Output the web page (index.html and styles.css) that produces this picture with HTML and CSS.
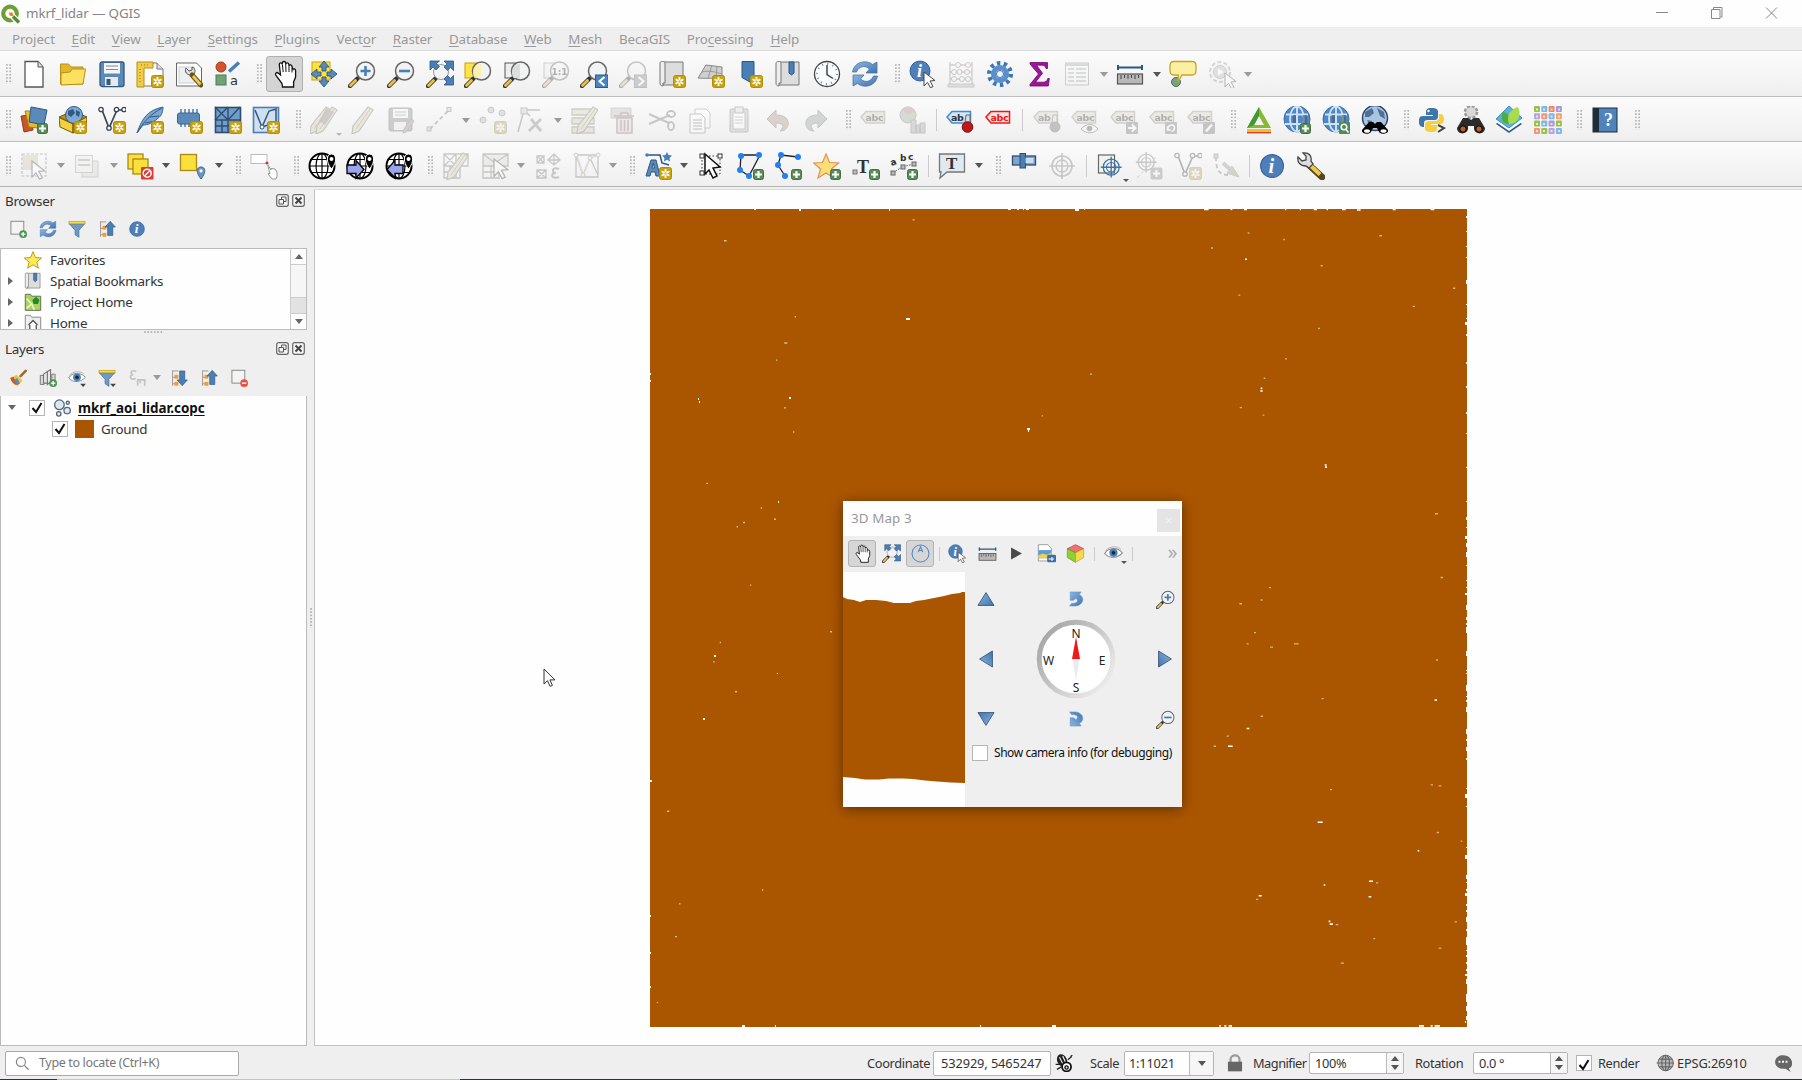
FILE: index.html
```html
<!DOCTYPE html>
<html lang="en">
<head>
<meta charset="utf-8">
<title>mkrf_lidar — QGIS</title>
<link rel="stylesheet" href="styles.css">
</head>
<body>
<svg class="paints" aria-hidden="true">
  <defs>
    <linearGradient id="g-blue" x1="0" y1="0" x2="1" y2="1"><stop offset="0" stop-color="#8db6e0"/><stop offset="1" stop-color="#3f74ae"/></linearGradient>
    <linearGradient id="g-ring" x1="0" y1="0.1" x2="1" y2="0.9"><stop offset="0" stop-color="#a2a2a2"/><stop offset=".45" stop-color="#c4c4c4"/><stop offset="1" stop-color="#f2f2f2"/></linearGradient>
  </defs>
</svg>
<svg class="sprite" aria-hidden="true">
  <g id="b-new"><rect x="15.500" y="15.500" width="12" height="12" rx="2" fill="#c9a20c" stroke="#b28f0a"/><path d="M21.500 17v9M17.600 19.300l7.800 4.500M25.400 19.300l-7.800 4.500" stroke="#fff" stroke-width="1.800"/><circle cx="21.500" cy="21.500" r="1.200" fill="#d9b93c"/></g>
  <g id="b-add"><rect x="17.500" y="17.500" width="10" height="10" rx="2" fill="#5a8c5a" stroke="#3f713f"/><path d="M22.500 19v7M19 22.500h7" stroke="#fff" stroke-width="2.200"/></g>
  <g id="arrow-cursor"><path d="M0 0l11 8.500-5 .5 3 5.500-2.500 1.300-3-5.500L0 14z" fill="#fff" stroke="#444" stroke-width="1"/></g>
  <g id="handle"><path d="M9.500 18.500L2 26" stroke="#333" stroke-width="4.400" stroke-linecap="round"/><path d="M7.500 20.500L2.500 25.500" stroke="#edc243" stroke-width="2.800" stroke-linecap="round"/></g>
  <g id="lens"><use href="#handle"/><circle cx="17.500" cy="11" r="9" fill="#f1f3f4" stroke="#666" stroke-width="1.500"/></g>
  <g id="tag"><path d="M1 11L6 5.500h18.500v11.500H6z" stroke-width="1.500"/></g>

  <symbol id="i-file" viewBox="0 0 28 28"><path d="M5 1.500h13l5 5.500v20H5z" fill="#fff" stroke="#555" stroke-width="1.300"/><path d="M18 1.500V7h5" fill="#ddd" stroke="#555"/></symbol>
  <symbol id="i-open" viewBox="0 0 28 28"><path d="M1.500 24V4h8l2.500 3h12v17z" fill="#e3b72a" stroke="#b98f17"/><path d="M2 25V13l9-1 2-3h13.500L24 24z" fill="#fce161" stroke="#b98f17"/></symbol>
  <symbol id="i-save" viewBox="0 0 28 28"><rect x="2" y="2" width="24" height="24.500" rx="2" fill="#5b8ab8" stroke="#33597f" stroke-width="1.300"/><rect x="6" y="3" width="16" height="10.500" fill="#f4f6f7"/><path d="M8 6h12M8 9.500h12" stroke="#888"/><rect x="7" y="17" width="13" height="9" fill="#e8ebed"/><rect x="8.500" y="19" width="4" height="6" fill="#33597f"/></symbol>
  <symbol id="i-layout" viewBox="0 0 28 28"><path d="M3 3h18l6 6v17H3z" fill="#fff" stroke="#777"/><path d="M21 3v6h6" fill="#ddd" stroke="#777"/><path d="M1 2h16v6H8v19H1z" fill="#f0cc4c" stroke="#b7900f"/><path d="M5 5h9M4 9v15" stroke="#c9a20c" stroke-dasharray="1 2" stroke-width="2"/><use href="#b-new"/></symbol>
  <symbol id="i-layouts" viewBox="0 0 28 28"><path d="M1.500 3h20l5 5v18h-25z" fill="#fff" stroke="#666"/><path d="M4 7h15v16H4z" fill="#eef1f4" stroke="#ccc"/><path d="M11 8l3 3 3-1 0-3c3 1 4 4 2 7l-3 1c-4 0-7-3-5-7z" fill="#ddd" stroke="#555"/><path d="M17 15l9 10" stroke="#6a5617" stroke-width="5" stroke-linecap="round"/><path d="M18 16l7.500 8.500" stroke="#efc94f" stroke-width="2.800"/></symbol>
  <symbol id="i-style" viewBox="0 0 28 28"><circle cx="7" cy="7" r="5" fill="#d4532e" stroke="#a43b1d"/><path d="M25 2.500L15 11.500" stroke="#4a7fb5" stroke-width="3.500"/><rect x="2" y="15" width="10" height="10" fill="#6fa277" stroke="#4a7d53"/><text x="16" y="25" class="t-icon t-reg" font-size="13">a</text></symbol>
  <symbol id="i-hand" viewBox="0 0 28 28"><path d="M9.500 15L8.300 4.500c-.2-2 2.600-2.300 3 0V3c.2-2 3.200-2 3.400 0v1c.4-1.700 3-1.500 3.200.4v1.400c.6-1.500 3-1 3 .8L22 9.500c.6-1.200 2.700-.8 2.600 1.200V17l-2 5v5H11.500l-.5-3.500L5 15.500c-1.500-2.300.8-3.900 2.400-2.300z" fill="#fff" stroke="#111" stroke-width="1.300"/><path d="M11.400 4.500l.8 7.500M14.700 4l.3 8M18 5.500v6.500M21 8v4.500" fill="none" stroke="#111"/></symbol>
  <symbol id="i-pansel" viewBox="0 0 28 28"><rect x="2" y="2" width="18" height="18" fill="#ffe340" stroke="#c9a20c"/><path d="M14 1l5 6h-3v4h-4V7H9zM14 27l-5-6h3v-4h4v4h3zM1 14l6-5v3h4v4H7v3zM27 14l-6 5v-3h-4v-4h4V9z" fill="#5b8ab8" stroke="#2d5681" stroke-width=".9"/></symbol>
  <symbol id="i-zin" viewBox="0 0 28 28"><use href="#lens"/><path d="M17.500 6v10M12.500 11h10" stroke="#4a7fb5" stroke-width="2.600"/></symbol>
  <symbol id="i-zout" viewBox="0 0 28 28"><use href="#lens"/><path d="M12 11h11" stroke="#4a7fb5" stroke-width="2.600"/></symbol>
  <symbol id="i-zfull" viewBox="0 0 28 28"><use href="#handle"/><circle cx="15" cy="12" r="7.500" fill="#f1f3f4" stroke="#999"/><path d="M4 1h9.500l-3 2.500 3 3-3.500 3.500-3-3-3 3zM27.500 1v9.500l-3-3-3 3L18 7l3-3-3-3zM27.500 25h-9.500l3-3-3-3 3.500-3.500 3 3 3-3z" fill="#4a7fb5" stroke="#2d5681" stroke-width=".8"/></symbol>
  <symbol id="i-zsel" viewBox="0 0 28 28"><rect x="1" y="3" width="15" height="15" fill="#ffe340" stroke="#c9a20c"/><use href="#lens"/><path d="M17 4v14h-6.500c-3-5-1.500-12 4-14z" fill="#fbf0a8" opacity=".9"/></symbol>
  <symbol id="i-zlay" viewBox="0 0 28 28"><rect x="2" y="3" width="14" height="15" fill="#eee" stroke="#555"/><use href="#lens"/><path d="M17 4v14h-6.500c-3-5-1.500-12 4-14z" fill="#ddd"/></symbol>
  <symbol id="i-znat" viewBox="0 0 28 28"><rect x="2" y="3" width="14" height="15" fill="#eee" stroke="#888"/><use href="#lens"/><text x="9.500" y="15" class="t-icon" font-size="9">1:1</text></symbol>
  <symbol id="i-zlast" viewBox="0 0 28 28"><use href="#lens"/><rect x="15.500" y="15" width="12.500" height="12.500" fill="#4a85c0" stroke="#33597f"/><path d="M24.500 17l-5 4.200 5 4.200" fill="none" stroke="#fff" stroke-width="2"/></symbol>
  <symbol id="i-znext" viewBox="0 0 28 28"><use href="#lens"/><rect x="15.500" y="15" width="12.500" height="12.500" fill="#888" stroke="#666"/><path d="M19.500 17l5 4.200-5 4.200" fill="none" stroke="#fff" stroke-width="2"/></symbol>
  <g id="scroll"><path d="M5 2h20v23H5z" fill="#ddd" stroke="#777"/><path d="M2 3c0-2 5-2 5 0v20h-2v3c-2 0-3-1-3-3z" fill="#eee" stroke="#777"/></g>
  <symbol id="i-nmap" viewBox="0 0 28 28"><use href="#scroll"/><use href="#b-new"/></symbol>
  <symbol id="i-n3d" viewBox="0 0 28 28"><path d="M1 18L9 5l16 2v13c-6-3-12-1-24-2z" fill="#cfcfcf" stroke="#888"/><path d="M5 12c7-2 13 0 20 2M15 5l-4 13M20 6l-1 13" fill="none" stroke="#999"/><use href="#b-new"/></symbol>
  <symbol id="i-nbook" viewBox="0 0 28 28"><path d="M7 1.500h12v23l-5-3-7-4z" fill="#4a7fb5" stroke="#2d5681"/><use href="#b-new"/></symbol>
  <symbol id="i-book" viewBox="0 0 28 28"><use href="#scroll"/><path d="M15 2h5v11l-2.500 2-2.500-2z" fill="#4a7fb5" stroke="#2d5681"/></symbol>
  <symbol id="i-clock" viewBox="0 0 28 28"><circle cx="14" cy="14" r="12.500" fill="#fafcff" stroke="#444" stroke-width="1.300"/><circle cx="14" cy="14" r="10" fill="none" stroke="#5b8ab8" stroke-width="2" stroke-dasharray="1 4.236"/><path d="M14 5v9.500l6 4" fill="none" stroke="#444" stroke-width="1.500"/></symbol>
  <symbol id="i-refresh" viewBox="0 0 28 28"><path d="M1.500 12C3 2 15-1 21.500 4.500L26 2v11H15l3.500-4C14 5 8 6 5.500 12z" fill="url(#g-blue)" stroke="#3a6ca4" stroke-width=".7"/><path d="M26.500 16C25 26 13 29 6.500 23.500L2 26V15h11l-3.500 4c4.500 4 10.500 3 13-3z" fill="url(#g-blue)" stroke="#3a6ca4" stroke-width=".7"/></symbol>
  <g id="info"><circle cx="11" cy="11" r="10" fill="#4f7fb8" stroke="#34649b"/><text x="8" y="17" font-family="Liberation Serif, serif" font-style="italic" font-weight="bold" font-size="18" fill="#fff">i</text></g>
  <symbol id="i-ident" viewBox="0 0 28 28"><use href="#info"/><use href="#arrow-cursor" x="15" y="12"/></symbol>
  <symbol id="i-info" viewBox="0 0 28 28"><use href="#info" transform="translate(1.500 1.500) scale(1.140)"/></symbol>
  <symbol id="i-abacus" viewBox="0 0 28 28"><path d="M3 2v22M25 2v22M3 5h22M3 12h22M3 19h22" fill="none" stroke="#888" stroke-width="1.300"/><path d="M1 24h26v3H1z" fill="#bbb" stroke="#888"/><g fill="#f4f4f4" stroke="#777"><circle cx="11" cy="5" r="2.500" stroke="#c66"/><circle cx="21" cy="5" r="2.500" stroke="#c66"/><circle cx="7" cy="12" r="2.500"/><circle cx="12.500" cy="12" r="2.500"/><circle cx="20" cy="12" r="2.500"/><circle cx="7" cy="19" r="2.500"/><circle cx="15" cy="19" r="2.500"/><circle cx="21" cy="19" r="2.500"/></g></symbol>
  <symbol id="i-gear" viewBox="0 0 28 28"><circle cx="14" cy="14" r="10.800" fill="none" stroke="#3e77b7" stroke-width="4.500" stroke-dasharray="3.400 3.386"/><circle cx="14" cy="14" r="6.500" fill="#d6e4f3" stroke="#5b8fca" stroke-width="5"/><circle cx="14" cy="14" r="3.500" fill="#f2f4f6" stroke="#3e77b7"/></symbol>
  <symbol id="i-sum" viewBox="0 0 28 28"><path d="M5 2.500h17.500v6h-1.500c-.8-2.500-1.500-3.300-4-3.300h-5.500l6 8-7 9H18c3 0 4-1.200 4.800-3.700h1.500l-1 7.500H5v-1.500l8.500-10.500L5 4z" fill="#a0119c" stroke="#6d0a6b" stroke-width=".8"/></symbol>
  <symbol id="i-table" viewBox="0 0 28 28"><rect x="2.500" y="3" width="23" height="22" fill="#f4f6fa" stroke="#888"/><path d="M3 4.500h22" stroke="#9aa7b7" stroke-width="3"/><path d="M5 9h6M13 9h10M5 13h6M13 13h10M5 17h6M13 17h10M5 21h6M13 21h10" stroke="#999" stroke-width="1.600"/></symbol>
  <symbol id="i-ruler" viewBox="0 0 28 28"><path d="M2 7.500h24M2 5v5M26 5v5" stroke="#2d5681" stroke-width="2"/><rect x="1.500" y="14" width="25" height="10" fill="#b8b8b8" stroke="#555" stroke-width="1.200"/><path d="M5 15v4M8.500 15v3M12 15v4M15.500 15v3M19 15v4M22.500 15v3" stroke="#444"/></symbol>
  <symbol id="i-tip" viewBox="0 0 28 28"><circle cx="7" cy="22" r="4.500" fill="#7ba081" stroke="#4c7253"/><path d="M5 1.500h18c3 0 4 2 4 4v5c0 3-1 4.500-4 4.500H13l-4 7 .3-7H5c-3 0-4-2-4-4.500v-5c0-2 1-4 4-4z" fill="#fbefa0" stroke="#c4a62a" stroke-width="1.300"/></symbol>
  <symbol id="i-action" viewBox="0 0 28 28"><circle cx="12" cy="12" r="10" fill="#f3f3f3" stroke="#999" stroke-width="2" stroke-dasharray="4 2.300"/><circle cx="12" cy="12" r="6.500" fill="#bbb" stroke="#888"/><path d="M10 8.500l6 3.500-6 3.500z" fill="#fff"/><use href="#arrow-cursor" x="17" y="13"/></symbol>

  <symbol id="i-dsm" viewBox="0 0 28 28"><path d="M1 10l10-1 2 15-9 2z" fill="#c8552b" stroke="#92391a"/><path d="M5 5h11l2 17-9-1z" fill="#e6ba2b" stroke="#a8850f"/><path d="M11 1l16 3-3 15-15-3z" fill="#5b8ab8" stroke="#2d5681"/><use href="#b-add"/></symbol>
  <symbol id="i-gpkg" viewBox="0 0 28 28"><path d="M0 11l14-6 14 6-14 7z" fill="#b8961a" stroke="#6b5a16"/><circle cx="15" cy="9" r="8.500" fill="#7da9d8" stroke="#33597f"/><path d="M9 5l5-2 2 4-4 4-3-2zM17 4l4 2-1 5-3-2z" fill="#33597f"/><path d="M0 11.500l14 6.500v9L1 21zM28 11l-14 7v9l13-6z" fill="#f2d13d" stroke="#6b5a16"/><use href="#b-new"/></symbol>
  <g id="vee"><path d="M4 4l7 18L19 4h7" fill="none" stroke="#3a4650" stroke-width="1.700"/><g fill="#fff" stroke="#3a4650" stroke-width="1.300"><circle cx="3" cy="3.500" r="2.200"/><circle cx="11" cy="22" r="2.200"/><circle cx="18.500" cy="3.500" r="2.200"/><circle cx="26" cy="3.500" r="2.200"/></g></g>
  <symbol id="i-shp" viewBox="0 0 28 28"><use href="#vee"/><use href="#b-new"/></symbol>
  <symbol id="i-spl" viewBox="0 0 28 28"><path d="M1 27C6 12 12 4 27 1c0 7-3 10-6 12-4 4-9 6-14 6z" fill="#7aa6d4" stroke="#3a6795"/><path d="M1 27C8 15 15 8 26 2M9 17l10-2M14 11l9-1" fill="none" stroke="#33597f"/><use href="#b-new"/></symbol>
  <symbol id="i-virt" viewBox="0 0 28 28"><path d="M6 3v18M10 3v18M14 3v18M18 3v18M22 3v18" stroke="#3a6795" stroke-width="1.300"/><rect x="2.500" y="7" width="22" height="11" rx="2" fill="#5b8ab8" stroke="#3a6795"/><use href="#b-new"/></symbol>
  <g id="grid"><rect x="1.500" y="1.500" width="25" height="25" fill="#6f9cca" stroke="#2c4d70" stroke-width="1.600"/><path d="M1 14h26M14 1v25M1 20h26M8 14v12M1 1l13 13L26 1M1 14L14 1" fill="none" stroke="#2c4d70" stroke-width="1.400"/></g>
  <symbol id="i-mesh" viewBox="0 0 28 28"><use href="#grid"/><use href="#b-new"/></symbol>
  <symbol id="i-gpsl" viewBox="0 0 28 28"><rect x="1.500" y="1.500" width="25" height="25" fill="#cfe0f2" stroke="#4a7fb5" stroke-width="1.600"/><path d="M3 4l7 17L17 5l7-2v16M10 21l9-3" fill="none" stroke="#33597f" stroke-width="1.500"/><circle cx="10" cy="21" r="2" fill="#fff" stroke="#33597f"/><use href="#b-new"/></symbol>
  <g id="pencil"><path d="M20 1l5 3L11 25l-7 3 1-8z" fill="#e6cf8c" stroke="#777" stroke-width="1.200"/><path d="M22 3L8 23" stroke="#a08a4b"/></g>
  <symbol id="i-pencils" viewBox="0 0 28 28"><use href="#pencil" x="-4"/><use href="#pencil" x="2"/><path d="M16 2l8 4-9 13-6-4z" fill="#8d6f6f" opacity=".8"/></symbol>
  <symbol id="i-pencil" viewBox="0 0 28 28"><use href="#pencil"/></symbol>
  <symbol id="i-saveed" viewBox="0 0 28 28"><rect x="2" y="2" width="23" height="23" rx="2" fill="#888" stroke="#666"/><rect x="6" y="3" width="15" height="9" fill="#f4f6f7"/><path d="M8 6h11M8 9h11" stroke="#888"/><rect x="7" y="16" width="12" height="8" fill="#eee"/><path d="M24 13l3 2-8 11-3 1 1-4z" fill="#b58f7a" stroke="#777"/></symbol>
  <symbol id="i-line" viewBox="0 0 28 28"><path d="M4 23L23 4" stroke="#777" stroke-width="1.800" stroke-dasharray="4 3"/><g fill="#ccc" stroke="#777"><rect x="1" y="21" width="4" height="4"/><rect x="21" y="1.500" width="4" height="4"/></g></symbol>
  <symbol id="i-pts" viewBox="0 0 28 28"><g fill="#bbb" stroke="#777"><circle cx="4" cy="14" r="3"/><circle cx="12" cy="4" r="3"/><circle cx="23" cy="7" r="3"/></g><use href="#b-new"/></symbol>
  <symbol id="i-vert" viewBox="0 0 28 28"><path d="M1 26L7 4h16M7 4l6 6" fill="none" stroke="#777" stroke-width="1.500"/><rect x="4" y="2" width="6" height="6" fill="#ccc" stroke="#777"/><path d="M12 25l12-12M14 13l10 12" stroke="#888" stroke-width="3"/></symbol>
  <symbol id="i-tedit" viewBox="0 0 28 28"><path d="M2 3h22v6H2zM2 12h22v6H2zM2 21h22v6H2z" fill="#e3cf85" stroke="#888" stroke-width="1.300"/><use href="#pencil" x="3"/></symbol>
  <symbol id="i-trash" viewBox="0 0 28 28"><path d="M2 2h20v10H2z" fill="#cbb" stroke="#999"/><path d="M5 10h20M8 12h15v15H8zM12 10V7h7v3M12 14v11M15.500 14v11M19 14v11" fill="#ead0c9" stroke="#a66" stroke-width="1.500"/></symbol>
  <symbol id="i-cut" viewBox="0 0 28 28"><path d="M1 8l20 9M1 18L22 9" stroke="#777" stroke-width="2"/><g fill="none" stroke="#866" stroke-width="1.800"><ellipse cx="23" cy="8" rx="4" ry="3"/><ellipse cx="23" cy="20" rx="3" ry="4"/></g></symbol>
  <symbol id="i-copy" viewBox="0 0 28 28"><path d="M9 3h11l4 4v15H9z" fill="#fff" stroke="#888"/><path d="M4 8h11l4 4v15H4z" fill="#fff" stroke="#777"/><path d="M7 14h9M7 17h9M7 20h9M7 23h9" stroke="#999" stroke-width="1.300"/></symbol>
  <symbol id="i-paste" viewBox="0 0 28 28"><rect x="5" y="3" width="18" height="23" rx="1" fill="#c9bda8" stroke="#777"/><path d="M8 6h12v17H8z" fill="#fff" stroke="#888"/><rect x="10" y="1" width="8" height="6" fill="#ddd" stroke="#777"/><path d="M10 11h8M10 14h8M10 17h8" stroke="#999"/></symbol>
  <symbol id="i-undo" viewBox="0 0 28 28"><path d="M3 13L12 4v5c9 0 13 4 12 10-1 4-4 6-8 6 5-5 3-8-4-8v5z" fill="#c5906c" stroke="#96694b"/></symbol>
  <symbol id="i-redo" viewBox="0 0 28 28"><path d="M25 13L16 4v5C7 9 3 13 4 19c1 4 4 6 8 6-5-5-3-8 4-8v5z" fill="#85a398" stroke="#5c7b70"/></symbol>
  <symbol id="i-lab" viewBox="0 0 28 28"><use href="#tag" fill="#dcd4ad" stroke="#999272"/><text x="5.500" y="15" class="t-tag">abc</text></symbol>
  <symbol id="i-dia" viewBox="0 0 28 28"><circle cx="10" cy="9" r="8" fill="#8fb183" stroke="#777"/><path d="M10 9L4 3a8 8 0 0 1 13 2z" fill="#c87f76"/><path d="M13 27V14h5v13zM18 27v-8h4v8zM22 27V17h5v10z" fill="#aaa" stroke="#777"/></symbol>
  <symbol id="i-labpin" viewBox="0 0 28 28"><use href="#tag" fill="#cfe7fb" stroke="#3f8cd4"/><text x="5" y="15" class="t-tag">ab</text><path d="M19 17l1-8h4v8z" fill="#ddd" stroke="#666"/><circle cx="21.500" cy="21" r="5.300" fill="#c01818" stroke="#7d0c0c"/></symbol>
  <symbol id="i-labred" viewBox="0 0 28 28"><use href="#tag" fill="#fbe4e2" stroke="#f01616"/><text x="5.500" y="15" class="t-tag t-red">abc</text></symbol>
  <symbol id="i-labpin2" viewBox="0 0 28 28"><use href="#tag" fill="#dcd4ad" stroke="#999272"/><text x="5" y="15" class="t-tag">ab</text><path d="M19 17l1-8h4v8z" fill="#ddd" stroke="#666"/><circle cx="22" cy="21" r="5" fill="#866" stroke="#755"/></symbol>
  <symbol id="i-labeye" viewBox="0 0 28 28"><use href="#tag" fill="#dcd4ad" stroke="#999272"/><text x="5.500" y="15" class="t-tag">abc</text><path d="M10 23c5-6 13-6 17 0-4 5-12 5-17 0z" fill="#fff" stroke="#555"/><circle cx="18.500" cy="22.500" r="2.800" fill="#555"/></symbol>
  <symbol id="i-labmove" viewBox="0 0 28 28"><use href="#tag" fill="#dcd4ad" stroke="#999272"/><text x="5.500" y="15" class="t-tag">abc</text><rect x="16" y="16" width="12" height="12" rx="1" fill="#777"/><path d="M18 22h7M22 18.500l3.500 3.500-3.500 3.500" fill="none" stroke="#fff" stroke-width="2"/></symbol>
  <symbol id="i-labrot" viewBox="0 0 28 28"><use href="#tag" fill="#dcd4ad" stroke="#999272"/><text x="5.500" y="15" class="t-tag">abc</text><rect x="16" y="16" width="12" height="12" rx="1" fill="#777"/><path d="M18.500 20.500v3.500h3.500M19 24c-1-5 6-7 6.500-2.500 0 2.500-1.500 3.500-3 4" fill="none" stroke="#fff" stroke-width="1.600"/></symbol>
  <symbol id="i-labed" viewBox="0 0 28 28"><use href="#tag" fill="#dcd4ad" stroke="#999272"/><text x="5.500" y="15" class="t-tag">abc</text><rect x="16" y="16" width="12" height="12" rx="1" fill="#776"/><path d="M19 25.500l6-7" stroke="#fff" stroke-width="2.500"/></symbol>
  <symbol id="i-tri" viewBox="0 0 28 28"><path d="M14 1L26 22H2zM14 10l-5 9h10z" fill="#8ab832" fill-rule="evenodd"/><path d="M14 1L2 22l7-3 5-9z" fill="#3f9a33"/><path d="M2 24h24" stroke="#e8c52c" stroke-width="2"/><path d="M2 26.500h24" stroke="#d8402a" stroke-width="1.800"/></symbol>
  <g id="web"><circle cx="14" cy="13" r="13" fill="#4d89c8" stroke="#396da7"/><path d="M3 8.500h22M2 18h24M14 0v26" stroke="#cfe2f5" stroke-width="2" fill="none"/><ellipse cx="14" cy="13" rx="7" ry="12.500" fill="none" stroke="#cfe2f5" stroke-width="1.800"/><path d="M10 9h3v8h-3zM20 9h4v8h-4z" fill="#555" opacity=".6"/></g>
  <symbol id="i-webadd" viewBox="0 0 28 28"><use href="#web"/><use href="#b-add"/></symbol>
  <symbol id="i-webq" viewBox="0 0 28 28"><use href="#web"/><rect x="17" y="16" width="11" height="12" rx="1" fill="#4e8a56"/><circle cx="22" cy="21" r="2.800" fill="none" stroke="#fff" stroke-width="1.500"/><path d="M24 23.500l2.500 3" stroke="#fff" stroke-width="1.500"/></symbol>
  <symbol id="i-webbin" viewBox="0 0 28 28"><circle cx="14" cy="12" r="12.500" fill="#a8c4e2" stroke="#2a4868" stroke-width="1.500"/><path d="M4 6l7-4 2 5-5 4-4 0zM16 2l7 4 1 7-5-3zM6 14l5 1-2 5z" fill="#4f6f94"/><path d="M8 16h4l2 2 2-2h4l7 8c1 4-7 5-9 2l-2-4h-4l-2 4c-2 3-10 2-9-2z" fill="#000"/><ellipse cx="6" cy="25" rx="3" ry="1.800" fill="#fff"/><ellipse cx="22.500" cy="25" rx="3" ry="1.800" fill="#fff"/></symbol>
  <symbol id="i-py" viewBox="0 0 28 28"><path d="M14 2c-6 0-6 2-6 5v2h7v1H5c-4 0-4 3-4 6 0 4 2 5 5 5V17c0-2 1-3 4-3h6c3 0 4-1 4-4V6c0-3-2-4-6-4z" fill="#3f75a8"/><path d="M13 26c6 0 6-2 6-5v-2h-6v-1h9c3 0 4-2 4-5s-1-5-5-5v4c0 2-2 3-4 3h-6c-2 0-4 1-4 4v3c0 3 2 4 6 4z" fill="#f4d040"/><circle cx="10.500" cy="5" r="1.200" fill="#fff"/><path d="M20 19l6 3-6 4" fill="none" stroke="#444" stroke-width="2"/></symbol>
  <symbol id="i-bin" viewBox="0 0 28 28"><circle cx="14" cy="6" r="6" fill="#d8d8d8" stroke="#999" stroke-width="2.500" stroke-dasharray="3 1.700"/><path d="M6 12h5l3 2 3-2h5l6 10c0 7-10 7-11 1v-3h-6v3c-1 6-11 6-11-1z" fill="#2b2b2b"/><circle cx="6" cy="23" r="3.200" fill="#b3642d" stroke="#000"/><circle cx="22" cy="23" r="3.200" fill="#b3642d" stroke="#000"/></symbol>
  <symbol id="i-leaf" viewBox="0 0 28 28"><path d="M14 7l13 11-13 9L1 18z" fill="#2f5d80"/><path d="M14 5l13 11-13 9L1 16z" fill="#fff"/><path d="M14 0l13 12-13 10L1 13z" fill="#5cb2dd" stroke="#4291bd"/><path d="M8 6c6 1 8 6 6 12-7 0-9-6-6-12z" fill="#4fae3a"/><path d="M23 1c4 8 0 17-9 17-3-8 1-15 9-17z" fill="#a8dc4e"/></symbol>
  <symbol id="i-dots" viewBox="0 0 28 28"><rect x="0" y="0" width="6" height="6" rx="1" fill="#9cc04c"/><rect x="7.300" y="0" width="6" height="6" rx="1" fill="#7cb8ea"/><rect x="14.600" y="0" width="6" height="6" rx="1" fill="#f08a66"/><rect x="21.900" y="0" width="6" height="6" rx="1" fill="#a99ad6"/><rect x="0" y="7.300" width="6" height="6" rx="1" fill="#b8a5da"/><rect x="7.300" y="7.300" width="6" height="6" rx="1" fill="#f2957a"/><rect x="14.600" y="7.300" width="6" height="6" rx="1" fill="#7cb8ea"/><rect x="21.900" y="7.300" width="6" height="6" rx="1" fill="#f2a36b"/><rect x="0" y="14.600" width="6" height="6" rx="1" fill="#9cc04c"/><rect x="7.300" y="14.600" width="6" height="6" rx="1" fill="#7cb8ea"/><rect x="14.600" y="14.600" width="6" height="6" rx="1" fill="#a99ad6"/><rect x="21.900" y="14.600" width="6" height="6" rx="1" fill="#9cc04c"/><rect x="0" y="21.900" width="6" height="6" rx="1" fill="#f2957a"/><rect x="7.300" y="21.900" width="6" height="6" rx="1" fill="#9cc04c"/><rect x="14.600" y="21.900" width="6" height="6" rx="1" fill="#b8a5da"/><rect x="21.900" y="21.900" width="6" height="6" rx="1" fill="#7cb8ea"/><path d="M2 3.500h2M9 3.500h2M16.500 3.500h2M24 3.500h2M2 10.500h2M9 10.500h2M16.500 10.500h2M24 10.500h2M2 18h2M9 18h2M16.500 18h2M24 18h2M2 25h2M9 25h2M16.500 25h2M24 25h2" stroke="#fff" stroke-opacity=".7" stroke-width="2"/></symbol>
  <symbol id="i-help" viewBox="0 0 28 28"><rect x="2" y="2" width="24" height="24" fill="#4f83ba" stroke="#1c2c3c"/><path d="M2 2h6v24H2z" fill="#1f2d3b"/><text x="13" y="20" font-family="Liberation Serif, serif" font-size="18" fill="#fff">?</text></symbol>

  <symbol id="i-select" viewBox="0 0 28 28"><rect x="2" y="2" width="24" height="22" fill="none" stroke="#777" stroke-width="1.200" stroke-dasharray="3 1.500"/><rect x="3" y="3" width="15" height="15" fill="#d8c592"/><use href="#arrow-cursor" transform="translate(12 9) scale(1.150)"/></symbol>
  <symbol id="i-form" viewBox="0 0 28 28"><rect x="9" y="9" width="16" height="16" fill="#e0d8be" stroke="#999"/><rect x="2.500" y="3.500" width="17" height="17" fill="#eee" stroke="#999"/><path d="M5 8h12M5 13h12" stroke="#999" stroke-width="2"/></symbol>
  <symbol id="i-desel" viewBox="0 0 28 28"><rect x="2" y="2" width="15" height="15" fill="#fbdf3c" stroke="#a98a12" stroke-width="1.300"/><rect x="7" y="7" width="15" height="15" fill="#fbdf3c" stroke="#a98a12" stroke-width="1.300"/><rect x="15" y="15" width="12.500" height="12.500" rx="1" fill="#e03a35"/><circle cx="21.200" cy="21.200" r="4" fill="none" stroke="#fff" stroke-width="1.500"/><path d="M18.500 24l5.500-5.500" stroke="#fff" stroke-width="1.500"/></symbol>
  <symbol id="i-selloc" viewBox="0 0 28 28"><rect x="1.500" y="2.500" width="16" height="16" fill="#fbdf3c" stroke="#a98a12" stroke-width="1.300"/><path d="M22 27c-5-6-5-12 0-12s5 6 0 12z" fill="#6d96bf" stroke="#3a6795"/><circle cx="22" cy="18.800" r="1.600" fill="#fff"/></symbol>
  <symbol id="i-pick" viewBox="0 0 28 28"><rect x="1" y="2.500" width="16" height="9" fill="#fff" stroke="#bbb"/><circle cx="17" cy="11" r="1.500" fill="#c33"/><path d="M18 13l3 5v-1.500l4 .5 2 3v4l-1 3h-4l-4-5 1-1 1 1-2-8z" fill="#fff" stroke="#999"/></symbol>
  <g id="wire"><circle cx="14" cy="14" r="12.500" fill="#fff" stroke="#000" stroke-width="2"/><path d="M1 14h26M14 1v26M3 7.500h22M3 20.500h22" stroke="#000" stroke-width="1.200"/><ellipse cx="14" cy="14" rx="6" ry="12.500" fill="none" stroke="#000" stroke-width="1.200"/></g>
  <g id="bpin"><path d="M23.500 17c-6-7-5-15 0-15s6 8 0 15z" fill="#000" stroke="#fff"/><circle cx="23.500" cy="7" r="2" fill="#fff"/></g>
  <symbol id="i-g1" viewBox="0 0 28 28"><use href="#wire"/><use href="#bpin"/></symbol>
  <symbol id="i-g2" viewBox="0 0 28 28"><use href="#wire"/><path d="M1 13h9V8.500l8 9-8 8.500v-4.500H1z" fill="#9aa5ec" stroke="#000" stroke-width="1.300"/><use href="#bpin"/></symbol>
  <symbol id="i-g3" viewBox="0 0 28 28"><use href="#wire"/><path d="M18 13h-8V8.500L2 17.500l8 8.500v-4.500h8z" fill="#9aa5ec" stroke="#000" stroke-width="1.300"/><use href="#bpin"/></symbol>
  <symbol id="i-m1" viewBox="0 0 28 28"><path d="M2 2h24v12H2zM2 14h16v12H2zM14 2v24M2 20h14M8 14v12M2 2l12 12L26 2M2 14L14 2" fill="none" stroke="#777" stroke-width="1.300"/><use href="#pencil" x="1"/></symbol>
  <symbol id="i-m2" viewBox="0 0 28 28"><rect x="2" y="2" width="25" height="12" fill="#e3dcc0"/><path d="M2 2h25v12H2zM2 14h16v12H2zM2 20h14M10 14v12M2 2l12 9L27 2" fill="none" stroke="#777" stroke-width="1.300"/><use href="#arrow-cursor" transform="translate(13 7) scale(1.250)"/></symbol>
  <symbol id="i-m3" viewBox="0 0 28 28"><path d="M3 4h7v7H3zl7 7M10 4l-7 7M3 18h9v8H3zl9 8M12 18l-9 8M20 2l6 6-6 5-6-5zM14 8h12M20 2v11" fill="none" stroke="#777" stroke-width="1.300"/><path d="M25 17c-7-3-8 4-3 4-6 0-5 7 3 4" fill="none" stroke="#777" stroke-width="2"/></symbol>
  <symbol id="i-m4" viewBox="0 0 28 28"><path d="M3 3h22v22H3zL10 23 17 6l8 17" fill="none" stroke="#777" stroke-width="1.300"/><path d="M4 4l6 19L17 6l7-2" fill="none" stroke="#bdb27a" stroke-width="1.800"/><g fill="#eee" stroke="#888"><circle cx="3" cy="3" r="2"/><circle cx="25" cy="3" r="2"/><circle cx="10" cy="23" r="2"/><circle cx="17" cy="6" r="2"/></g></symbol>
  <symbol id="i-anno" viewBox="0 0 28 28"><path d="M3 3h13l2 8 7 2" fill="none" stroke="#2d5681" stroke-width="1.500"/><circle cx="3" cy="3" r="1.800" fill="#4a7fb5"/><path d="M23 0l1.500 3 3.500.5-2.500 2.500.6 3.500-3.100-1.700-3.100 1.700.6-3.500L18 3.500l3.500-.5z" fill="#4a7fb5"/><path d="M2 24L7 8h5l4 16h-4l-1-4H7l-1 4zM8 16h2.500L9.300 11z" fill="#5b8ab8" stroke="#2d5681" fill-rule="evenodd"/><use href="#b-new"/></symbol>
  <symbol id="i-cursel" viewBox="0 0 28 28"><rect x="5" y="4" width="18" height="18" fill="none" stroke="#333" stroke-dasharray="1.500 2"/><g fill="#fff" stroke="#333"><rect x="3" y="2" width="4" height="4"/><rect x="21" y="2" width="4" height="4"/><rect x="3" y="19" width="4" height="4"/></g><path d="M8 2l15 13-7 1 4 8-4 2-4-8-4 4z" fill="#fff" stroke="#111" stroke-width="1.500"/></symbol>
  <symbol id="i-poly" viewBox="0 0 28 28"><path d="M5 3h19L13 24l-9-6z" fill="#f2f2f2" stroke="#222" stroke-width="1.300"/><g fill="#2080f5"><circle cx="5" cy="4" r="3"/><circle cx="23" cy="3" r="3"/><circle cx="4" cy="18" r="3"/><circle cx="13" cy="24" r="3"/></g><use href="#b-add"/></symbol>
  <symbol id="i-pline" viewBox="0 0 28 28"><path d="M24 5L7 3 4 13l7 11" fill="none" stroke="#222" stroke-width="1.300"/><g fill="#2080f5"><circle cx="24" cy="5" r="3"/><circle cx="7" cy="3" r="3"/><circle cx="4" cy="13" r="3"/><circle cx="11" cy="24" r="3"/></g><use href="#b-add"/></symbol>
  <symbol id="i-star" viewBox="0 0 28 28"><path d="M13 2l3.500 8.500 9 .5-7 6 2.500 9-8-5-8 5 2.500-9-7-6 9-.5z" fill="#fbdf74" stroke="#e0915a" stroke-width="1.200"/><use href="#b-add"/></symbol>
  <symbol id="i-text" viewBox="0 0 28 28"><rect x="1" y="18" width="4" height="4" fill="#bbb" stroke="#777"/><text x="5" y="21" font-family="Liberation Serif, serif" font-weight="bold" font-size="18" fill="#333">T</text><use href="#b-add"/></symbol>
  <symbol id="i-textl" viewBox="0 0 28 28"><text x="1" y="13" class="t-icon" font-size="9" transform="rotate(-20 4 12)">a</text><text x="10" y="9" class="t-icon" font-size="9">b</text><text x="18" y="8" class="t-icon" font-size="9">c</text><path d="M3 21l9-6 12-3" fill="none" stroke="#777" stroke-dasharray="2 1"/><g fill="#bbb" stroke="#666"><rect x="1" y="19" width="4" height="4"/><rect x="11" y="13" width="4" height="4"/><rect x="22" y="10" width="4" height="4"/></g><use href="#b-add"/></symbol>
  <symbol id="i-call" viewBox="0 0 28 28"><path d="M1.500 2h25v18H9l-7 6 1-6H1.500z" fill="#dfeaf0" stroke="#777" stroke-width="1.300"/><text x="8" y="17" font-family="Liberation Serif, serif" font-weight="bold" font-size="17" fill="#333">T</text></symbol>
  <symbol id="i-topo" viewBox="0 0 28 28"><rect x="2.500" y="4" width="23" height="9" fill="#7fa5cf" stroke="#2d4f75" stroke-width="1.300"/><rect x="10" y="1.500" width="5.500" height="14.500" fill="#4a7fb5" stroke="#2d4f75"/><path d="M15.500 6h8v5h-8z" fill="#cadcf0"/></symbol>
  <g id="cross"><circle cx="14" cy="14" r="10" fill="none" stroke-width="1.600"/><circle cx="14" cy="14" r="6" fill="none" stroke-width="1.300"/><path d="M14 1v26M1 14h26" stroke-width="1.700"/></g>
  <symbol id="i-cross" viewBox="0 0 28 28"><use href="#cross" stroke="#777"/></symbol>
  <symbol id="i-snap" viewBox="0 0 28 28"><rect x="2.500" y="3" width="16" height="18" fill="#f3f3ee" stroke="#666" stroke-width="1.200"/><use href="#cross" transform="translate(4 4) scale(.8)" stroke="#3a74b0"/></symbol>
  <symbol id="i-cross2" viewBox="0 0 28 28"><use href="#cross" transform="translate(0 -1) scale(.8)" stroke="#777"/><path d="M2 26L22 4" stroke="#999" stroke-dasharray="4 2"/><rect x="15.500" y="15.500" width="12" height="12" rx="2" fill="#888"/><path d="M21.500 18v7M18 21.500h7" stroke="#fff" stroke-width="2"/></symbol>
  <symbol id="i-trace" viewBox="0 0 28 28"><path d="M4 5c0 14 3 17 12 18" fill="none" stroke="#777" stroke-width="1.800" stroke-dasharray="4 3"/><rect x="2" y="2" width="4" height="4" fill="#aaa" stroke="#777"/><path d="M11 11l7 6" stroke="#a89878" stroke-width="4"/><path d="M20 14l7 11-12-4z" fill="#a89878" stroke="#888"/></symbol>
  <symbol id="i-wrench" viewBox="0 0 28 28"><path d="M12 13l13 12" stroke="#55481a" stroke-width="6.500" stroke-linecap="round"/><path d="M14 14l9 8.500" stroke="#efc94f" stroke-width="4"/><path d="M1 5l4 4 4-1 0-4-3-3c6-1 9 3 8 8l2 3-4 4-3-2C3 14 0 10 1 5z" fill="#ddd" stroke="#444" stroke-width="1.300"/></symbol>

  <symbol id="i-addl" viewBox="0 0 28 28"><rect x="3" y="2" width="20" height="20" fill="#f4f4f2" stroke="#888" stroke-width="1.500"/><circle cx="22" cy="22" r="6" fill="#4e9458"/><path d="M22 18.500v7M18.500 22h7" stroke="#fff" stroke-width="2"/></symbol>
  <symbol id="i-reml" viewBox="0 0 28 28"><rect x="3" y="2" width="20" height="20" fill="#f4f4f2" stroke="#888" stroke-width="1.500"/><circle cx="22" cy="22" r="6" fill="#e8504c"/><path d="M18.500 22h7" stroke="#fff" stroke-width="2.200"/></symbol>
  <symbol id="i-filter" viewBox="0 0 28 28"><path d="M2 6h24l-9 10v11l-6-4v-7z" fill="#6f9ac6" stroke="#3a6795"/><rect x="1.500" y="2" width="25" height="4" fill="#f4dc4c" stroke="#b7981b"/></symbol>
  <g id="tree"><path d="M4 2v24M4 3h9M4 13h5M4 23h5" fill="none" stroke="#999" stroke-width="1.500"/><rect x="7" y="9" width="6" height="6" fill="#f39a31"/><rect x="7" y="20" width="6" height="6" fill="#f39a31"/></g>
  <symbol id="i-coll" viewBox="0 0 28 28"><use href="#tree"/><path d="M19 2l8 9h-4v13h-8V11h-4z" fill="#4a7fb5" stroke="#2d5681"/></symbol>
  <symbol id="i-exp" viewBox="0 0 28 28"><use href="#tree"/><path d="M19 26l8-9h-4V3h-8v14h-4z" fill="#4a7fb5" stroke="#2d5681"/></symbol>
  <symbol id="i-brush" viewBox="0 0 28 28"><path d="M26 3l-8 8" stroke="#9c6a26" stroke-width="4" stroke-linecap="round"/><path d="M2 14l10-5 9 9-7 8c-6 0-10-5-12-12z" fill="#f1c23f"/><path d="M2 14l5-2 6 13c-6-1-9-5-11-11z" fill="#d4532e"/><path d="M7 17l6-3 4 8-4 3z" fill="#5b8ab8"/></symbol>
  <symbol id="i-group" viewBox="0 0 28 28"><path d="M2 10h6v14H2zM20 8h5v16h-5z" fill="#ddd" stroke="#777" stroke-width="1.500"/><path d="M7 8l6-4v18H7zM13 4l5-3v19l-5 4z" fill="#e8e8e8" stroke="#777" stroke-width="1.800"/><circle cx="22" cy="22" r="6" fill="#4e9458"/><path d="M22 18.500v7M18.500 22h7" stroke="#fff" stroke-width="2"/></symbol>
  <symbol id="i-eye" viewBox="0 0 28 28"><path d="M1 14C7 5 19 4 27 13c-7 8-19 9-26 1z" fill="#fff" stroke="#888" stroke-width="1.500"/><circle cx="14" cy="13" r="6" fill="#4a7fb5"/><circle cx="14" cy="13" r="2.700" fill="#16263a"/><path d="M2 10C8 3 19 2 25 8" fill="none" stroke="#999"/></symbol>
  <symbol id="i-eps" viewBox="0 0 28 28"><path d="M13 4C4 0 3 8 8 9c-6 0-6 9 4 6M15 26V17h11v9M19 17v5" fill="none" stroke="#777" stroke-width="2.600"/></symbol>
  <symbol id="i-fav" viewBox="0 0 28 28"><path d="M14 1l3.800 9.200 9.700.7-7.500 6.300 2.400 9.600L14 21.500l-8.400 5.300L8 17.200.5 10.900l9.700-.7z" fill="#fdea54" stroke="#b79a1b" stroke-width="1.500"/></symbol>
  <symbol id="i-phome" viewBox="0 0 28 28"><path d="M2 27V2h8l2 3h14v22z" fill="#a5d463" stroke="#5f6f4b" stroke-width="1.500"/><path d="M4 9l8 8 4 9M4 24l8-7" fill="none" stroke="#f4f7c4" stroke-width="2.500"/><path d="M13 11l6-5 5 5-2 6h-7z" fill="#248a24"/></symbol>
  <symbol id="i-home" viewBox="0 0 28 28"><path d="M2 27V2h8l2 3h14v22z" fill="#eee" stroke="#888" stroke-width="1.500"/><path d="M7 17l7-7 7 7M9 17v9h10v-9" fill="#fff" stroke="#555" stroke-width="2"/></symbol>
  <symbol id="i-cloud" viewBox="0 0 28 28"><g fill="#dfe7ee" stroke="#52677b" stroke-width="2"><circle cx="10" cy="9" r="7.500"/><circle cx="23" cy="6" r="2.500"/><circle cx="22" cy="18" r="5"/><circle cx="9" cy="23" r="3.500"/></g></symbol>

  <symbol id="i-nav" viewBox="0 0 28 28"><circle cx="14" cy="14" r="12.500" fill="none" stroke="#4a86c6" stroke-width="1.500"/><path d="M10.500 12L14 4l3.500 8M12 9.500h4" fill="none" stroke="#4a86c6" stroke-width="1.500"/></symbol>
  <symbol id="i-play" viewBox="0 0 28 28"><path d="M6 5l16 9-16 9z" fill="#4a4a4a"/></symbol>
  <symbol id="i-export" viewBox="0 0 28 28"><path d="M2 1h14l5 5v19H2z" fill="#fff" stroke="#777"/><path d="M2 9h19v12H2z" fill="#5f9bd4"/><path d="M2 17l6-3 6 2 7-3v8H2z" fill="#f0d050"/><rect x="15" y="16" width="13" height="11" rx="2" fill="#3f6f9f"/><path d="M17 22h8M22 19v6" stroke="#fff" stroke-width="1.500"/></symbol>
  <symbol id="i-cube" viewBox="0 0 28 28"><path d="M14 1l12 6-12 6L2 7z" fill="#f07373" stroke="#b33"/><path d="M2 7l12 6v14L2 20z" fill="#8fd037" stroke="#5a9a14"/><path d="M26 7l-12 6v14l12-7z" fill="#f6dc4d" stroke="#bf9c16"/></symbol>
  <symbol id="i-up" viewBox="0 0 28 28"><path d="M14 4l12.500 20h-25z" fill="url(#g-blue)" stroke="#34516f" stroke-width="1.300"/></symbol>
  <symbol id="i-rot" viewBox="0 0 28 28"><path d="M5 3h17l-3 4c9 4 7 17-6 18H4l3-4c9 0 12-4 7-8l-4 3H5z" fill="url(#g-blue)" stroke="#5f92c8" stroke-width=".8"/></symbol>

  <symbol id="i-search" viewBox="0 0 28 28"><circle cx="11" cy="11" r="8.500" fill="none" stroke="#888" stroke-width="2.200"/><path d="M17.500 17.500l8 8" stroke="#888" stroke-width="2.500"/></symbol>
  <symbol id="i-bug" viewBox="0 0 28 28"><ellipse cx="11" cy="10" rx="7.500" ry="10" transform="rotate(-25 11 10)" fill="#222"/><path d="M7 5l5 10M12 3l4 9" stroke="#fff" stroke-width="1.600"/><path d="M1 16h7M3 24l7-4M20 9l6-5M27 2l-3 2" stroke="#222" stroke-width="2"/><circle cx="18" cy="20" r="7" fill="#fff" stroke="#111" stroke-width="2.800"/><circle cx="18" cy="21" r="2.500" fill="none" stroke="#111" stroke-width="2.200"/></symbol>
  <symbol id="i-lock" viewBox="0 0 28 28"><path d="M7 14V9c0-9 14-9 14 0v5" fill="none" stroke="#999" stroke-width="3.500"/><path d="M3 12h22v15H3z" fill="#666"/></symbol>
  <symbol id="i-crs" viewBox="0 0 28 28"><circle cx="15" cy="14" r="12" fill="#bbb" stroke="#666" stroke-width="1.500"/><path d="M1 14h27M15 2v24M5 8h20M5 20h20" stroke="#666" stroke-width="1.800"/><ellipse cx="15" cy="14" rx="6" ry="12" fill="none" stroke="#666" stroke-width="1.800"/></symbol>
  <symbol id="i-chat" viewBox="0 0 28 28"><path d="M14 2c17 0 17 20 9 20l3 6-8-5C-3 25-3 2 14 2z" fill="#666"/><path d="M7 12h3M12.500 12h3M18 12h3" stroke="#fff" stroke-width="3"/></symbol>
  <symbol id="i-float" viewBox="0 0 13 13"><rect x=".7" y=".7" width="11.600" height="11.600" rx="2" fill="#f4f4f4" stroke="#666" stroke-width="1.200"/><path d="M3 5.500h4.500V10H3zM5.500 5V3H10v4.500H8" fill="none" stroke="#555"/></symbol>
  <symbol id="i-close" viewBox="0 0 13 13"><rect x=".7" y=".7" width="11.600" height="11.600" rx="2" fill="#f4f4f4" stroke="#666" stroke-width="1.200"/><path d="M3.500 3.500l6 6M9.500 3.500l-6 6" stroke="#444" stroke-width="2"/></symbol>
</svg>

<div class="window">
  <header class="titlebar">
    <svg class="logo" viewBox="0 0 20 20"><circle cx="9" cy="9.500" r="6.800" fill="none" stroke="#6c9f36" stroke-width="4.200"/><path d="M9.500 10l8 8.500" stroke="#fff" stroke-width="6"/><path d="M12 12.500l6 6" stroke="#4f8f2c" stroke-width="3.400"/><path d="M8 8.500h3.500l1 4-4-1z" fill="#ee7c2c"/></svg>
    <span class="title">mkrf_lidar — QGIS</span>
    <svg class="winbtns" viewBox="0 0 146 27" fill="none" stroke="#888"><path d="M8 12.500h12"/><path d="M63.500 9.500h8.500v9h-8.500zM65.500 9V7.500h8.500V17h-1.500"/><path d="M118 7.500l11 11M129 7.500l-11 11"/></svg>
  </header>
  <nav class="menu">
    <span>Project</span><span><u>E</u>dit</span><span><u>V</u>iew</span><span><u>L</u>ayer</span><span><u>S</u>ettings</span><span><u>P</u>lugins</span><span>Vect<u>o</u>r</span><span><u>R</u>aster</span><span><u>D</u>atabase</span><span><u>W</u>eb</span><span><u>M</u>esh</span><span>BecaGIS</span><span>Pro<u>c</u>essing</span><span><u>H</u>elp</span>
  </nav>

  <div class="toolbar first-row">
    <i class="grip first"></i>
    <b><svg><use href="#i-file"/></svg></b><b><svg><use href="#i-open"/></svg></b><b><svg><use href="#i-save"/></svg></b><b><svg><use href="#i-layout"/></svg></b><b><svg><use href="#i-layouts"/></svg></b><b><svg><use href="#i-style"/></svg></b>
    <i class="grip"></i>
    <b class="on"><svg><use href="#i-hand"/></svg></b><b><svg><use href="#i-pansel"/></svg></b><b><svg><use href="#i-zin"/></svg></b><b><svg><use href="#i-zout"/></svg></b><b><svg><use href="#i-zfull"/></svg></b><b><svg><use href="#i-zsel"/></svg></b><b><svg><use href="#i-zlay"/></svg></b><b class="off"><svg><use href="#i-znat"/></svg></b><b><svg><use href="#i-zlast"/></svg></b><b class="off"><svg><use href="#i-znext"/></svg></b><b><svg><use href="#i-nmap"/></svg></b><b><svg><use href="#i-n3d"/></svg></b><b><svg><use href="#i-nbook"/></svg></b><b><svg><use href="#i-book"/></svg></b><b><svg><use href="#i-clock"/></svg></b><b><svg><use href="#i-refresh"/></svg></b>
    <i class="grip"></i>
    <b><svg><use href="#i-ident"/></svg></b><b class="off"><svg><use href="#i-abacus"/></svg></b><b><svg><use href="#i-gear"/></svg></b><b><svg><use href="#i-sum"/></svg></b><b class="off"><svg><use href="#i-table"/></svg></b><i class="drop dim"></i><b><svg><use href="#i-ruler"/></svg></b><i class="drop"></i><b><svg><use href="#i-tip"/></svg></b><b class="off"><svg><use href="#i-action"/></svg></b><i class="drop dim"></i>
  </div>

  <div class="toolbar">
    <i class="grip first"></i>
    <b><svg><use href="#i-dsm"/></svg></b><b><svg><use href="#i-gpkg"/></svg></b><b><svg><use href="#i-shp"/></svg></b><b><svg><use href="#i-spl"/></svg></b><b><svg><use href="#i-virt"/></svg></b><b><svg><use href="#i-mesh"/></svg></b><b><svg><use href="#i-gpsl"/></svg></b>
    <i class="grip"></i>
    <b class="off more"><svg><use href="#i-pencils"/></svg></b><b class="off"><svg><use href="#i-pencil"/></svg></b><b class="off"><svg><use href="#i-saveed"/></svg></b><b class="off"><svg><use href="#i-line"/></svg></b><i class="drop dim"></i><b class="off"><svg><use href="#i-pts"/></svg></b><b class="off"><svg><use href="#i-vert"/></svg></b><i class="drop dim"></i><b class="off"><svg><use href="#i-tedit"/></svg></b><b class="off"><svg><use href="#i-trash"/></svg></b><b class="off"><svg><use href="#i-cut"/></svg></b><b class="off"><svg><use href="#i-copy"/></svg></b><b class="off"><svg><use href="#i-paste"/></svg></b><b class="off"><svg><use href="#i-undo"/></svg></b><b class="off"><svg><use href="#i-redo"/></svg></b>
    <i class="grip"></i>
    <b class="off"><svg><use href="#i-lab"/></svg></b><b class="off"><svg><use href="#i-dia"/></svg></b><i class="sep"></i><b><svg><use href="#i-labpin"/></svg></b><b><svg><use href="#i-labred"/></svg></b><i class="sep"></i><b class="off"><svg><use href="#i-labpin2"/></svg></b><b class="off"><svg><use href="#i-labeye"/></svg></b><b class="off"><svg><use href="#i-labmove"/></svg></b><b class="off"><svg><use href="#i-labrot"/></svg></b><b class="off"><svg><use href="#i-labed"/></svg></b>
    <i class="grip"></i>
    <b><svg><use href="#i-tri"/></svg></b><b><svg><use href="#i-webadd"/></svg></b><b><svg><use href="#i-webq"/></svg></b><b><svg><use href="#i-webbin"/></svg></b>
    <i class="grip"></i>
    <b><svg><use href="#i-py"/></svg></b><b><svg><use href="#i-bin"/></svg></b><b><svg><use href="#i-leaf"/></svg></b><b><svg><use href="#i-dots"/></svg></b>
    <i class="grip"></i>
    <b><svg><use href="#i-help"/></svg></b>
    <i class="grip"></i>
  </div>

  <div class="toolbar last">
    <i class="grip first"></i>
    <b class="off"><svg><use href="#i-select"/></svg></b><i class="drop dim"></i><b class="off"><svg><use href="#i-form"/></svg></b><i class="drop dim"></i><b><svg><use href="#i-desel"/></svg></b><i class="drop"></i><b><svg><use href="#i-selloc"/></svg></b><i class="drop"></i>
    <i class="grip"></i>
    <b><svg><use href="#i-pick"/></svg></b>
    <i class="grip"></i>
    <b><svg><use href="#i-g1"/></svg></b><b><svg><use href="#i-g2"/></svg></b><b><svg><use href="#i-g3"/></svg></b>
    <i class="grip"></i>
    <b class="off"><svg><use href="#i-m1"/></svg></b><b class="off"><svg><use href="#i-m2"/></svg></b><i class="drop dim"></i><b class="off"><svg><use href="#i-m3"/></svg></b><b class="off"><svg><use href="#i-m4"/></svg></b><i class="drop dim"></i>
    <i class="grip"></i>
    <b><svg><use href="#i-anno"/></svg></b><i class="drop"></i><b><svg><use href="#i-cursel"/></svg></b><b><svg><use href="#i-poly"/></svg></b><b><svg><use href="#i-pline"/></svg></b><b><svg><use href="#i-star"/></svg></b><b><svg><use href="#i-text"/></svg></b><b><svg><use href="#i-textl"/></svg></b><i class="sep"></i><b><svg><use href="#i-call"/></svg></b><i class="drop"></i>
    <i class="grip"></i>
    <b><svg><use href="#i-topo"/></svg></b><b class="off"><svg><use href="#i-cross"/></svg></b><i class="sep"></i><b class="more"><svg><use href="#i-snap"/></svg></b><b class="off"><svg><use href="#i-cross2"/></svg></b><b class="off"><svg><use href="#i-shp"/></svg></b><b class="off"><svg><use href="#i-trace"/></svg></b><i class="sep tight"></i><b><svg><use href="#i-info"/></svg></b><b><svg><use href="#i-wrench"/></svg></b>
  </div>

  <main class="work">
    <aside class="docks">
      <section class="dock">
        <div class="dock-title"><span>Browser</span><svg><use href="#i-float"/></svg><svg><use href="#i-close"/></svg></div>
        <div class="dock-tools"><svg><use href="#i-addl"/></svg><svg><use href="#i-refresh"/></svg><svg><use href="#i-filter"/></svg><svg><use href="#i-coll"/></svg><svg><use href="#i-info"/></svg></div>
        <div class="browser">
          <ul>
            <li><i></i><svg><use href="#i-fav"/></svg>Favorites</li>
            <li><i class="exp"></i><svg><use href="#i-book"/></svg>Spatial Bookmarks</li>
            <li><i class="exp"></i><svg><use href="#i-phome"/></svg>Project Home</li>
            <li><i class="exp"></i><svg><use href="#i-home"/></svg>Home</li>
          </ul>
          <div class="scroll"><span class="sb up"></span><span class="track"></span><span class="thumb"></span><span class="sb down"></span></div>
        </div>
      </section>
      <div class="split-h"></div>
      <section class="dock grow">
        <div class="dock-title second"><span>Layers</span><svg><use href="#i-float"/></svg><svg><use href="#i-close"/></svg></div>
        <div class="dock-tools layers-tools"><svg><use href="#i-brush"/></svg><svg><use href="#i-group"/></svg><svg viewBox="0 0 28 28"><use href="#i-eye" width="28" height="28"/><path d="M19 23h9l-4.500 5z" fill="#444"/></svg><svg viewBox="0 0 28 28"><use href="#i-filter" width="28" height="28"/><path d="M19 23h9l-4.500 5z" fill="#444"/></svg><svg class="off"><use href="#i-eps"/></svg><i class="drop dim"></i><svg><use href="#i-exp"/></svg><svg><use href="#i-coll"/></svg><svg><use href="#i-reml"/></svg></div>
        <div class="layers">
          <div class="row"><i class="open"></i><span class="check"><svg viewBox="0 0 14 14"><path d="M2.500 7L6 11l5.500-9"/></svg></span><svg class="ic"><use href="#i-cloud"/></svg><strong>mkrf_aoi_lidar.copc</strong></div>
          <div class="row child"><span class="check"><svg viewBox="0 0 14 14"><path d="M2.500 7L6 11l5.500-9"/></svg></span><i class="swatch"></i><span>Ground</span></div>
        </div>
      </section>
    </aside>
    <div class="split-v"></div>
    <section class="map">
      <svg class="canvas" viewBox="315 190 1487 855">
        <path d="M649.500 209H1466.500V1026.500H649.500z" fill="#aa5500"/>
        <g fill="none" stroke="#fefefe" stroke-width="4">
          <path transform="translate(1180 195) scale(.3333 .5357)" stroke-width="2.500" opacity=".55" d="M93 99h6M203 71h5M310 83h5M422 132h6M598 76h8M175 187h6M819 174h7M698 208h7M414 249h6M315 306h6M251 342h5M179 397h7M248 411h5M765 595h9M782 714h7M267 733h6M242 756h6M178 763h8M222 817h6M200 838h6M270 844h9M342 838h14M768 868h6M425 940h6M242 973h7M140 1010h7M101 1029h7M450 1110h6M752 1101h7M776 1103h8M770 1190h7M842 1206h5M228 1315h7M588 1284h7M467 1362h8M580 1388h6M824 1357h7M776 1406h8M482 1434h10"/>
          <path transform="translate(1180 195) scale(.3333 .5357)" stroke-width="3" d="M195 120h6M242 361h5M241 366h7M434 504h6M435 508h6M764 943h7M200 996h8M144 1029h14M413 1171h15M431 1288h5M713 1224h5M567 1281h12M566 1310h8M236 1308h9M446 1356h5M449 1361h10M72 27h14M152 27h5M192 27h9M315 27h4M359 27h4M401 27h10M440 27h4M486 27h11M531 28h11M638 27h9M752 27h11M118 1551h5M133 1551h6M146 1551h10M717 1551h15M752 1551h6M764 1551h16"/>
          <path transform="translate(1180 195) scale(.3333 .5357)" stroke-width="4.500" d="M859 40v3M859 67v2M859 95v2M859 115v2M859 159v7M859 203v2M859 230v2M858 238v5M859 260v4M859 312v3M859 357v3M859 405v4M859 445v2M859 508v2M859 571v2M859 601v6M859 619v3M858 637v5M859 649v9M859 666v9M859 691v2M859 719v2M859 732v2M858 743v4M859 765v9M859 787v7M859 799v3M859 807v11M859 851v9M859 886v2M859 892v2M859 914v12M859 935v3M859 943v4M859 955v11M859 997v9M859 1015v4M859 1031v6M859 1051v4M859 1107v2M858 1119v7M859 1141v2M859 1217v2M858 1232v8M859 1270v7M859 1282v3M859 1295v4M858 1303v6M859 1324v3M859 1335v3M859 1348v10M859 1370v3M859 1386v14M859 1409v3M859 1419v4M859 1432v3M859 1445v3M858 1454v3M859 1463v9M859 1492v15M859 1514v9M859 1533v7M857 1542v4"/>
          <path transform="translate(640 200) scale(.3333 .5357)" stroke-width="2.500" opacity=".6" d="M252 76h8M464 218h4M433 267h9M408 299h4M432 388h6M459 433h4M199 529h5M362 575h4M402 596h6M290 610h4M309 602h6M1205 403h4M1350 325h6M330 719h4M570 806h6M239 826h4M220 862h4M285 918h6M81 1141h7M117 1314h5M366 1288h4M105 1375h6M818 37h6"/>
          <path transform="translate(640 200) scale(.3333 .5357)" stroke-width="3.500" d="M799 222h10M447 370h7M173 372h5M176 377h4M1161 427h8M1163 431h4M413 563h4M222 851h5M410 884h4M189 969h6M51 1498h4M27 325h6M27 338h6M27 1085h8M27 1336h5M27 1405h6M27 1469h6M477 18h5M343 17h5M576 17h5M746 18h4M1104 17h10M1131 17h6M1148 17h5M1158 17h10M1305 18h12M1331 17h4M306 1542h8M405 1542h4M1019 1542h4M1236 1542h12"/>
        </g>
      </svg>
      <svg class="pointer" viewBox="0 0 14 20"><path d="M1 1v15l3.500-3.300 2.600 5.700 2.300-1-2.500-5.500H12z" fill="#fff" stroke="#333"/></svg>

      <div class="dialog">
        <div class="dlg-title"><span>3D Map 3</span><i>×</i></div>
        <div class="dlg-tools">
          <b class="on"><svg><use href="#i-hand"/></svg></b><b><svg><use href="#i-zfull"/></svg></b><b class="on"><svg><use href="#i-nav"/></svg></b><i class="sep"></i><b><svg><use href="#i-ident"/></svg></b><b><svg><use href="#i-ruler"/></svg></b><b><svg><use href="#i-play"/></svg></b><b><svg><use href="#i-export"/></svg></b><b><svg><use href="#i-cube"/></svg></b><i class="sep"></i><b class="more"><svg><use href="#i-eye"/></svg></b><i class="sep"></i><span>»</span>
        </div>
        <div class="dlg-body">
          <svg class="terrain" viewBox="0 0 122 235"><path d="M0 25l4 2 7 1 6 2 6-2h10l10 1 8 2h16l6-2 8-1 10-2 10-2 8-2 8-1 2-1h3v191l-14-.5-14-1-12-1-12-1.500-10-.5H46l-10 1H22l-10-1.500-12-1z" fill="#aa5500"/></svg>
          <div class="nav3d">
            <div class="pad">
              <svg><use href="#i-up"/></svg><svg class="rot"><use href="#i-rot"/></svg><svg class="z"><use href="#i-zin"/></svg>
              <svg class="l"><use href="#i-up"/></svg>
              <svg class="compass" viewBox="0 0 80 80"><circle cx="40" cy="40" r="36.800" fill="#fff" stroke="url(#g-ring)" stroke-width="5"/><path d="M40 18l4 22h-8z" fill="#f01818"/><path d="M36.500 40h7L40 62z" fill="#ececf0"/><text x="40" y="18.500">N</text><text x="40" y="72.500">S</text><text x="12.500" y="46">W</text><text x="66" y="46">E</text></svg>
              <svg class="r"><use href="#i-up"/></svg>
              <svg class="d"><use href="#i-up"/></svg><svg class="rot flip"><use href="#i-rot"/></svg><svg class="z"><use href="#i-zout"/></svg>
            </div>
            <label><span class="check"></span><span class="lbl">Show camera info (for debugging)</span></label>
          </div>
        </div>
      </div>
    </section>
  </main>

  <footer class="status">
    <div class="locate"><svg><use href="#i-search"/></svg><span>Type to locate (Ctrl+K)</span></div>
    <span class="s-coord">Coordinate</span><div class="field f-coord">532929, 5465247</div>
    <svg class="s-bug"><use href="#i-bug"/></svg>
    <span class="s-scale">Scale</span><div class="field f-scale"><span>1:11021</span><i class="combo"></i></div>
    <svg class="s-lock"><use href="#i-lock"/></svg>
    <span class="s-mag">Magnifier</span><div class="field f-spin"><span>100%</span><i class="spin"></i></div>
    <span class="s-rot">Rotation</span><div class="field f-spin"><span>0.0 °</span><i class="spin"></i></div>
    <span class="check s-check"><svg viewBox="0 0 14 14"><path d="M2.500 7L6 11l5.500-9"/></svg></span><span class="s-render">Render</span>
    <svg class="s-crs"><use href="#i-crs"/></svg><span class="s-epsg">EPSG:26910</span>
    <svg class="s-chat"><use href="#i-chat"/></svg>
  </footer>
  <div class="edge"></div>
</div>
</body>
</html>
```
FILE: styles.css
```css
* { box-sizing: border-box; }
body { margin: 0; font: 13.4px/18px "Noto Sans", "Open Sans", sans-serif; letter-spacing: -.3px; color: #333; background: #efefef; }
.sprite { display: none; }
.paints { position: absolute; width: 0; height: 0; }
.t-icon { font-family: "DejaVu Sans", sans-serif; font-weight: bold; fill: #333; letter-spacing: 0; }
.t-reg { font-weight: normal; }
.t-tag { font: bold 9.5px "DejaVu Sans", sans-serif; fill: #333; letter-spacing: -.3px; }
.t-red { fill: #f01616; }
.window { width: 1802px; height: 1080px; display: flex; flex-direction: column; overflow: hidden; }

.titlebar { flex: none; height: 27px; background: #fefefe; display: flex; align-items: center; padding-left: 1px; }
.logo { width: 20px; height: 20px; }
.title { margin: -1px 0 0 5px; color: #858585; flex: 1; letter-spacing: -.13px; }
.winbtns { width: 146px; height: 27px; margin-right: 8px; }

.menu { flex: none; height: 24px; display: flex; align-items: center; gap: 16.700px; padding: 0 0 0 12px; color: #999; letter-spacing: -.12px; border-bottom: 1px solid #d8d8d8; }
.menu u { text-underline-offset: 2px; }

.toolbar { height: 45.500px; flex: none; display: flex; align-items: center; padding-top: 2px; background: linear-gradient(#fbfbfb, #efefef); border-bottom: 1.500px solid #bdbdbd; border-top: 1px solid #fff; }
.toolbar.first-row { padding-top: 1px; }
.toolbar.last { height: 45px; border-bottom-color: #b4b4b4; }
.toolbar b, .dlg-tools b { flex: none; display: flex; align-items: center; justify-content: center; position: relative; }
.toolbar b { width: 38.700px; height: 38px; }
.toolbar b svg { width: 28px; height: 28px; }
.off { opacity: .36; filter: grayscale(.6); }
.toolbar b.on { width: 37px; height: 36px; margin: 0 .85px; background: #d4d4d4; border: 1px solid #b0b0b0; border-radius: 3px; }
.grip { flex: none; width: 18.600px; height: 20px; padding-left: 10px; }
.grip.first { width: 14.900px; padding-left: 6px; }
.grip::before { content: ""; display: block; width: 5px; height: 20px; background: radial-gradient(circle at 1px 1px, #b4b4b4 .8px, transparent 1px) 0 0 / 3.300px 3.300px; }
.drop { flex: none; width: 14.200px; display: flex; justify-content: center; }
.drop::before, .more::after { content: ""; border: 4.500px solid transparent; border-top: 5px solid #555; border-bottom: 0; }
.drop.dim::before { border-top-color: #9a9a9a; }
.more::after { position: absolute; right: 1px; bottom: 3px; border-width: 3px 3px 0; }
.sep { flex: none; width: 9.200px; height: 22px; display: flex; justify-content: center; }
.sep.tight { width: 7px; }
.sep::before { content: ""; width: 1px; background: #ccc; }

.work { flex: 1; min-height: 0; display: flex; }
.docks { width: 307px; flex: none; display: flex; flex-direction: column; }
.dock { display: flex; flex-direction: column; }
.grow { flex: 1; min-height: 0; }
.dock-title { height: 26px; display: flex; align-items: center; gap: 3px; padding: 2px 2px 0 5px; }
.dock-title.second { padding-top: 0; }
.dock-title span { flex: 1; }
.dock-title svg { width: 13px; height: 13px; margin-top: -2px; }
.dock-tools { height: 35px; display: flex; align-items: center; gap: 11.700px; padding: 0 0 3px 9px; }
.dock-tools svg { width: 18px; height: 18px; flex: none; }
.layers-tools { height: 34px; padding-bottom: 3px; }
.layers-tools .drop { width: 10px; margin: 0 -5px 0 -5px; }
.layers-tools .drop + svg { margin-left: 1px; }
.browser { height: 82px; background: #fefefe; border: 1px solid #bbb; display: flex; overflow: hidden; }
.browser ul { flex: 1; margin: 0; padding: 0 0 0 5px; list-style: none; }
.browser li { height: 21.200px; display: flex; align-items: center; white-space: nowrap; letter-spacing: -.22px; }
.browser li svg { width: 18px; height: 18px; margin-right: 8px; }
.browser li i { width: 18px; }
.browser li i.exp::before { content: ""; display: block; width: 0; border: 4px solid transparent; border-left: 5px solid #666; border-right: 0; margin-left: 2px; }
.scroll { width: 16px; display: flex; flex-direction: column; background: #f6f6f6; border-left: 1px solid #ccc; }
.sb { height: 16px; display: flex; align-items: center; justify-content: center; background: #fdfdfd; border: solid #ccc; border-width: 0 0 1px; }
.sb::before { content: ""; border: 4.500px solid transparent; border-top: 0; border-bottom: 5px solid #666; }
.sb.down { border-width: 1px 0 0; }
.sb.down::before { border-top: 5px solid #666; border-bottom: 0; }
.track { flex: 1; }
.thumb { height: 16px; background: #e2e2e2; border-top: 1px solid #ccc; }
.split-h { height: 6px; width: 20px; margin: 0 auto; background: radial-gradient(circle at 1px 2px, #b8b8b8 .8px, transparent 1px) 0 0 / 3.300px 5px repeat-x; }
.layers { flex: 1; background: #fefefe; border: 1px solid #bbb; border-top: 0; padding-top: 1px; }
.row { height: 21.500px; display: flex; align-items: center; padding-left: 7px; }
.row .open { width: 20.500px; display: flex; }
.row .open::before { content: ""; border: 4.500px solid transparent; border-top: 5px solid #666; border-bottom: 0; }
.row .ic { width: 18px; height: 18px; margin: 0 7.500px 0 8px; }
.row strong { text-decoration: underline; text-underline-offset: 2px; color: #111; letter-spacing: 0; }
.row.child { padding-left: 51px; }
.swatch { width: 19px; height: 18px; background: #a50; margin: 0 7px; }
.check { flex: none; width: 16px; height: 16px; background: #fff; border: 1px solid #b5b5b5; display: flex; }
.check svg { width: 14px; height: 14px; }
.check path { fill: none; stroke: #111; stroke-width: 2; }

.split-v { width: 7px; flex: none; display: flex; align-items: center; justify-content: flex-end; padding: 4px 1px 0 0; }
.split-v::before { content: ""; width: 3px; height: 20px; background: radial-gradient(circle at 1px 1px, #b8b8b8 .8px, transparent 1px) 0 0 / 4px 3.300px; }
.map { flex: 1; margin-top: 2px; position: relative; background: #fefefe; border: 1px solid #c4c4c4; border-right: 0; border-top-color: #ddd; }
.canvas { display: block; width: 1487px; height: 855px; shape-rendering: crispEdges; }
.pointer { position: absolute; left: 228px; top: 478px; width: 14px; height: 20px; }

.dialog { position: absolute; left: 528px; top: 311px; width: 339px; height: 306px; background: #efefef; box-shadow: 0 2px 12px rgba(0, 0, 0, .45); display: flex; flex-direction: column; }
.dlg-title { height: 35px; background: #fefefe; display: flex; align-items: center; padding: 2px 2px 3px 8px; color: #999; }
.dlg-title span { flex: 1; letter-spacing: .1px; }
.dlg-title i { width: 23px; height: 23px; margin-top: 5px; background: #e4e4e4; color: #f4f4f4; text-align: center; font-style: normal; line-height: 22px; }
.dlg-tools { height: 36px; display: flex; align-items: center; padding: 0 0 1px 5px; }
.dlg-tools b { width: 29.500px; height: 27px; }
.dlg-tools b svg { width: 19px; height: 19px; }
.dlg-tools b.on { width: 28px; margin: 0 .75px 0 0; background: #d6d6d6; border: 1px solid #b4b4b4; border-radius: 3px; }
.dlg-tools .sep { width: 8px; height: 14px; }
.dlg-tools span { margin: -3px 0 0 auto; padding-right: 5px; font-size: 19px; color: #aaa; }
.dlg-body { flex: 1; display: flex; }
.terrain { flex: none; width: 122px; height: 235px; background: #fefefe; }
.nav3d { flex: 1; padding: 15px 3px 0 7px; }
.pad { display: grid; grid-template-columns: 28px 1fr 28px; grid-template-rows: 24px 96px 24px; align-items: center; justify-items: center; }
.pad svg { width: 18px; height: 18px; }
.pad .z { width: 19px; height: 19px; }
.pad .compass { width: 80px; height: 80px; }
.compass text { font: 12px "Noto Sans", sans-serif; letter-spacing: 0; text-anchor: middle; fill: #222; }
.l { transform: rotate(-90deg); }
.r { transform: rotate(90deg); }
.d { transform: rotate(180deg); }
.flip { transform: scaleY(-1); }
.nav3d label { display: flex; align-items: center; gap: 6px; margin-top: 13px; font-size: 12px; letter-spacing: -.44px; color: #111; white-space: nowrap; }

.status { height: 33.500px; flex: none; display: flex; align-items: center; padding: 2px 0 0 5px; font-size: 12.800px; letter-spacing: -.35px; }
.status > * { flex: none; white-space: nowrap; }
.status svg { width: 18px; height: 18px; }
.locate { width: 234px; height: 25px; background: #fff; border: 1px solid #aaa; border-radius: 2px; display: flex; align-items: center; padding-left: 9px; gap: 9px; color: #777; font-size: 12.500px; }
.locate svg { width: 15px; height: 15px; }
.s-coord { width: 66px; margin-left: 628px; }
.field { height: 25px; background: #fff; border: 1px solid #b5b5b5; border-radius: 2px; display: flex; align-items: center; }
.field span { flex: 1; }
.f-coord { width: 118px; padding-left: 7px; letter-spacing: -.1px; }
.s-bug { margin-left: 4px; }
.s-scale { width: 34px; margin-left: 17px; }
.f-scale { width: 90px; padding-left: 4px; letter-spacing: -.2px; }
.combo { width: 24px; align-self: stretch; border-left: 1px solid #bbb; background: #f6f6f6; display: flex; align-items: center; justify-content: center; }
.combo::before, .spin::before, .spin::after { content: ""; border: 4.500px solid transparent; border-top: 5px solid #555; border-bottom: 0; }
.s-lock { margin: 0 9px 0 12px; }
.s-mag { width: 56px; letter-spacing: -.5px; }
.f-spin { width: 95px; height: 22px; padding-left: 5px; }
.spin { width: 17px; align-self: stretch; border-left: 1px solid #bbb; background: #f6f6f6; display: flex; flex-direction: column; align-items: center; justify-content: center; gap: 4px; }
.spin::before { border-top: 0; border-bottom: 5px solid #555; }
.s-rot { width: 58px; margin-left: 11px; }
.s-check { margin-left: 8px; }
.s-render { width: 52px; margin-left: 6px; }
.s-crs { margin: 0 3px 0 6px; }
.s-epsg { width: 97px; letter-spacing: -.15px; }
.edge { flex: none; height: 1px; background: linear-gradient(90deg, #26343c 57px, #c4c4c4 57px 460px, #26343c 460px); }
```
